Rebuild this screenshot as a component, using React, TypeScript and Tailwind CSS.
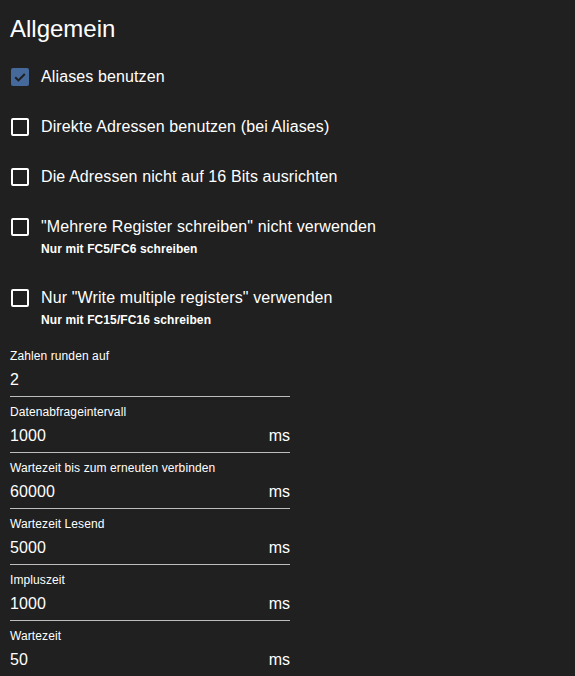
import React from "react";

function Box({ checked }: { checked?: boolean }) {
  if (checked) {
    return (
      <div className="w-[18px] h-[18px] rounded-[2px] bg-[#45699a] flex items-center justify-center shrink-0">
        <svg width="18" height="18" viewBox="0 0 18 18">
          <path d="M4.2 9.2 L7.4 12.4 L13.8 6" fill="none" stroke="#1f1f1f" strokeWidth="2" />
        </svg>
      </div>
    );
  }
  return <div className="w-[18px] h-[18px] rounded-[2px] border-2 border-white shrink-0" />;
}

function Check({ label, helper, checked, className }: { label: string; helper?: string; checked?: boolean; className?: string }) {
  return (
    <div className={"pl-[11px] " + (className ?? "")}>
      <div className="flex items-center h-[24px] gap-[12px]">
        <Box checked={checked} />
        <span className="text-[16px] leading-[24px] tracking-[0.12px] text-white">{label}</span>
      </div>
      {helper && (
        <div className="pl-[30px] mt-[2px] text-[12px] leading-[16px] font-bold tracking-[0.1px] text-white">{helper}</div>
      )}
    </div>
  );
}

function Field({ label, value, unit }: { label: string; value: string; unit?: string }) {
  return (
    <div className="w-[280px] mb-[7px]">
      <div className="text-[12px] leading-[16px] tracking-[0.1px] text-white">{label}</div>
      <div className="mt-[4px] pb-[4px] border-b border-[#bdbdbd] flex justify-between items-center h-[29px]">
        <span className="text-[16px] leading-[24px] tracking-[0.12px] text-white">{value}</span>
        {unit && <span className="text-[16px] leading-[24px] text-white">{unit}</span>}
      </div>
    </div>
  );
}

export default function App() {
  return (
    <div
      className="w-[575px] h-[676px] overflow-hidden bg-[#202020] text-white"
      style={{ fontFamily: '"Liberation Sans", Arial, sans-serif' }}
    >
      <div className="pt-[15px] pl-[10px]">
        <h1 className="text-[24px] leading-[28px] font-normal text-white">Allgemein</h1>
      </div>
      <Check className="mt-[22px]" label="Aliases benutzen" checked />
      <Check className="mt-[26px]" label="Direkte Adressen benutzen (bei Aliases)" />
      <Check className="mt-[26px]" label="Die Adressen nicht auf 16 Bits ausrichten" />
      <Check className="mt-[26px]" label={'"Mehrere Register schreiben" nicht verwenden'} helper="Nur mit FC5/FC6 schreiben" />
      <Check className="mt-[29px]" label={'Nur "Write multiple registers" verwenden'} helper="Nur mit FC15/FC16 schreiben" />
      <div className="pl-[10px] mt-[20px] flex flex-col">
        <Field label="Zahlen runden auf" value="2" />
        <Field label="Datenabfrageintervall" value="1000" unit="ms" />
        <Field label="Wartezeit bis zum erneuten verbinden" value="60000" unit="ms" />
        <Field label="Wartezeit Lesend" value="5000" unit="ms" />
        <Field label="Impluszeit" value="1000" unit="ms" />
        <Field label="Wartezeit" value="50" unit="ms" />
      </div>
    </div>
  );
}
